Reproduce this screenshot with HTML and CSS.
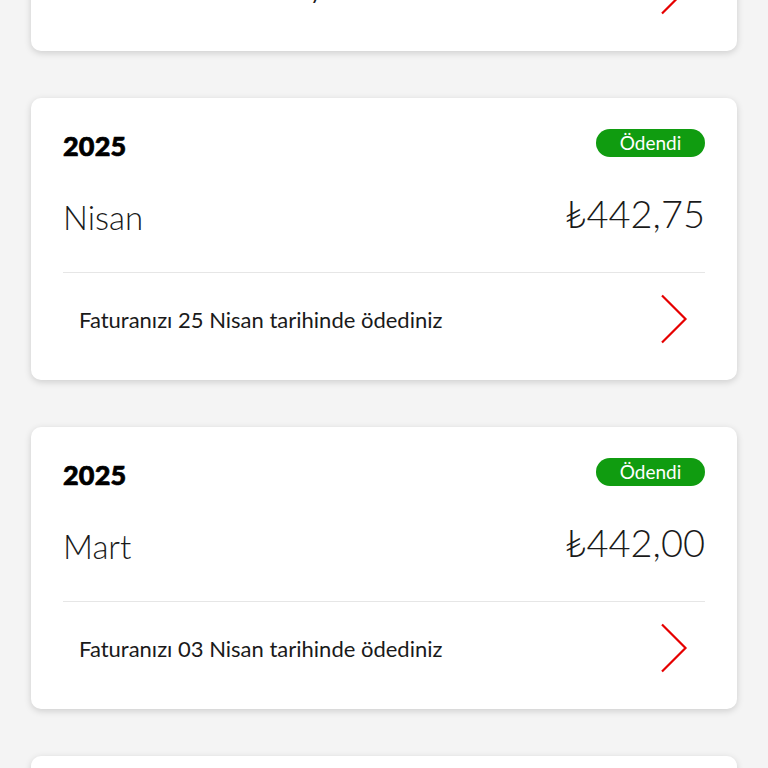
FILE: index.html
```html
<!DOCTYPE html>
<html lang="tr">
<head>
    <meta charset="UTF-8">
    <meta name="viewport" content="width=device-width, initial-scale=1.0">
    <title>Faturalarım</title>
    <link rel="stylesheet" href="styles.css">
</head>
<body>
    <div class="bill-list">
        <div class="bill-card">
            <div class="bill-head">
                <span class="bill-year">2025</span>
                <span class="bill-badge">Ödendi</span>
            </div>
            <div class="bill-main">
                <span class="bill-month">Mayıs</span>
                <span class="bill-amount">₺442,75</span>
            </div>
            <div class="bill-foot">
                <span class="bill-note">Son ödeme tarihi 28 Mayıs</span>
                <svg class="chevron" width="28" height="50" viewBox="0 0 28 50"><polyline points="2,1.5 25.5,25 2,48.5" fill="none" stroke="#e60000" stroke-width="2.2"/></svg>
            </div>
        </div>

        <div class="bill-card">
            <div class="bill-head">
                <span class="bill-year">2025</span>
                <span class="bill-badge">Ödendi</span>
            </div>
            <div class="bill-main">
                <span class="bill-month">Nisan</span>
                <span class="bill-amount">₺442,75</span>
            </div>
            <div class="bill-foot">
                <span class="bill-note">Faturanızı 25 Nisan tarihinde ödediniz</span>
                <svg class="chevron" width="28" height="50" viewBox="0 0 28 50"><polyline points="2,1.5 25.5,25 2,48.5" fill="none" stroke="#e60000" stroke-width="2.2"/></svg>
            </div>
        </div>

        <div class="bill-card">
            <div class="bill-head">
                <span class="bill-year">2025</span>
                <span class="bill-badge">Ödendi</span>
            </div>
            <div class="bill-main">
                <span class="bill-month">Mart</span>
                <span class="bill-amount">₺442,00</span>
            </div>
            <div class="bill-foot">
                <span class="bill-note">Faturanızı 03 Nisan tarihinde ödediniz</span>
                <svg class="chevron" width="28" height="50" viewBox="0 0 28 50"><polyline points="2,1.5 25.5,25 2,48.5" fill="none" stroke="#e60000" stroke-width="2.2"/></svg>
            </div>
        </div>

        <div class="bill-card">
            <div class="bill-head">
                <span class="bill-year">2025</span>
                <span class="bill-badge">Ödendi</span>
            </div>
            <div class="bill-main">
                <span class="bill-month">Şubat</span>
                <span class="bill-amount">₺441,50</span>
            </div>
            <div class="bill-foot">
                <span class="bill-note">Faturanızı 04 Mart tarihinde ödediniz</span>
                <svg class="chevron" width="28" height="50" viewBox="0 0 28 50"><polyline points="2,1.5 25.5,25 2,48.5" fill="none" stroke="#e60000" stroke-width="2.2"/></svg>
            </div>
        </div>
    </div>
</body>
</html>
```

FILE: styles.css
```css
body {
    margin: 0;
    background: #f4f4f4;
    font-family: 'Lato', 'DejaVu Sans', sans-serif;
    color: #1a1a1a;
    overflow: hidden;
    height: 768px;
}
.bill-list {
    display: flex;
    flex-direction: column;
    gap: 47px;
    padding: 0 31px;
    margin-top: -231px;
}
.bill-card {
    background: #fff;
    border-radius: 10px;
    box-shadow: 0 2px 7px rgba(0, 0, 0, 0.16);
    padding: 30px 32px 0 32px;
    height: 282px;
    box-sizing: border-box;
}
.bill-head {
    display: flex;
    justify-content: space-between;
    align-items: center;
    height: 34px;
}
.bill-year {
    font-size: 27px;
    font-weight: 900;
    color: #000;
    -webkit-text-stroke: 0.7px #000;
    letter-spacing: 0.2px;
}
.bill-badge {
    background: #109c10;
    color: #fff;
    font-size: 19px;
    border-radius: 14px;
    width: 109px;
    height: 28px;
    line-height: 28px;
    text-align: center;
    margin-top: -4px;
}
.bill-main {
    display: flex;
    justify-content: space-between;
    align-items: center;
    height: 50px;
    margin-top: 28px;
    padding-bottom: 32px;
    border-bottom: 1px solid #e6e6e6;
}
.bill-month {
    font-size: 33px;
    font-weight: 300;
    margin-top: 4px;
}
.bill-amount {
    font-size: 38px;
    font-weight: 300;
    margin-top: -4px;
}
.bill-foot {
    display: flex;
    justify-content: space-between;
    align-items: center;
    height: 92px;
    padding: 0 17px 0 16px;
}
.bill-note {
    font-size: 22px;
}
.chevron {
    display: block;
}
```
